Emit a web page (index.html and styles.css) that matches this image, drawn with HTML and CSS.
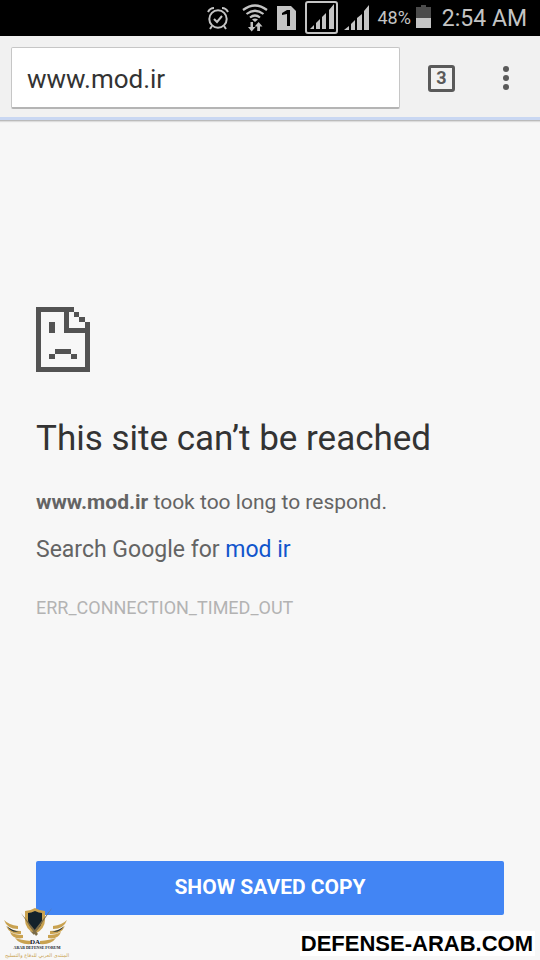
FILE: index.html
```html
<!DOCTYPE html>
<html lang="en">
<head>
  <meta charset="UTF-8">
  <meta name="viewport" content="width=device-width, initial-scale=1">
  <title>www.mod.ir</title>
  <link rel="stylesheet" href="styles.css">
</head>
<body>
  <div class="status-bar">
    <svg class="icon-alarm" width="22" height="24" viewBox="0 0 22 24" fill="none" stroke="#c4c4c4" stroke-width="2">
      <circle cx="11" cy="13" r="8.7"/>
      <path d="M7 13l3 3 5-6M1 6q2-4 6-4M21 6q-2-4-6-4M5 20l-2 3M17 20l2 3"/>
    </svg>
    <svg class="icon-wifi" width="26" height="28" viewBox="0 0 26 28" fill="none" stroke="#c4c4c4" stroke-width="2.200">
      <path d="M1 6q12-9 24 0M4.500 10q8.500-6.500 17 0M8 13.500q5-4 10 0"/>
      <path d="M10 15.500l3 2.500 3-2.500q-3-2-6 0z" fill="#c4c4c4" stroke="none"/>
      <path d="M8.500 18h2.500v5h2.500L9.700 27.500 6 23h2.500zM15.200 27v-4.500h-2.500l3.900-4.500 3.900 4.500H18V27z" fill="#c4c4c4" stroke="none"/>
    </svg>
    <svg class="icon-sim" width="19" height="24" viewBox="0 0 19 24">
      <path d="M0 0h14l5 5v19H0z" fill="#c4c4c4"/>
      <path d="M5 7l5-3h3v16h-3V8L5 9z" fill="#000"/>
    </svg>
    <svg class="icon-signal-box" width="34" height="34" viewBox="0 0 34 34" fill="#c4c4c4">
      <rect x="1" y="1" width="31" height="31" rx="2" fill="none" stroke="#c4c4c4" stroke-width="2"/>
      <path d="M5 28l4-4v4zM11 22l4-4v10h-4zM17 16l4-4v16h-4zM24 9l5-6v25h-5z"/>
    </svg>
    <svg class="icon-signal" width="26" height="26" viewBox="0 0 26 26" fill="#c4c4c4">
      <path d="M0 25l5-4v4zM7 19l4-4v10H7zM13 13l5-4v16h-5zM20 6l5-6v25h-5z"/>
    </svg>
    <span class="battery-level">48%</span>
    <svg class="icon-battery" width="15" height="23" viewBox="0 0 15 23">
      <path d="M0 2h5V0h5v2h5v11H0z" fill="#4b4b4b"/>
      <path d="M0 13h15v10H0z" fill="#c4c4c4"/>
    </svg>
    <span class="clock">2:54 AM</span>
  </div>

  <header class="toolbar">
    <input class="url" type="text" value="www.mod.ir" aria-label="Address">
    <button class="tabs" type="button" aria-label="Open tabs">3</button>
    <button class="menu" type="button" aria-label="Menu">
      <svg width="6" height="24" viewBox="0 0 6 24" fill="#5a5a5a">
        <circle cx="3" cy="3" r="3"/><circle cx="3" cy="12" r="3"/><circle cx="3" cy="21" r="3"/>
      </svg>
    </button>
  </header>

  <main class="error">
    <svg class="sad-page" width="54" height="65" viewBox="0 0 54 65" fill="#535353" shape-rendering="crispEdges">
      <path d="M0 0h38v5h-5v16h16v-6h5v50H0zM5 5v55h44V26H28V5z" fill-rule="evenodd"/>
      <path d="M38 5h5v5h-5zM43 10h6v5h-6zM13 15h6v11h-6zM19 42h16v5H19zM13 47h6v5h-6zM35 47h6v5h-6z"/>
    </svg>
    <h1>This site can’t be reached</h1>
    <p class="reason"><strong>www.mod.ir</strong> took too long to respond.</p>
    <p class="suggestion">Search Google for <a href="#">mod ir</a></p>
    <p class="code">ERR_CONNECTION_TIMED_OUT</p>
    <button class="saved-copy" type="button">SHOW SAVED COPY</button>
  </main>

  <div class="forum-logo">
    <svg width="66" height="37" viewBox="0 0 66 37">
      <path d="M31 0q5 3 10 3v9q0 9-10 14-10-5-10-14V3q5 0 10-3z" fill="#c9a250"/>
      <path d="M31 3q4 2 7 2v7q0 7-7 11-7-4-7-11V5q3 0 7-2z" fill="#13222b"/>
      <path d="M17 5l17 21-2 2zM48 0L30 27l-4-4 3 1z" fill="#7c6c47"/>
      <g fill="#c9a250">
        <path d="M0 12q5 5 14 6v3Q3 21 0 12zM2 18q6 5 15 5v3Q6 27 2 18zM6 24q5 3 13 3v3Q9 32 6 24zM11 30q6 2 16 3v3q-11 1-16-6z"/>
        <path d="M63 12q-5 5-14 6v3q11 0 14-9zM61 18q-6 5-15 5v3q11 1 15-8zM57 24q-5 3-13 3v3q10 2 13-6zM52 30q-6 2-16 3v3q11 1 16-6z"/>
      </g>
      <path d="M3 18q6 6 13 5-8 3-13-5zM60 18q-6 6-13 5 8 3 13-5z" fill="#26343b"/>
      <text class="logo-initials" x="31" y="36" text-anchor="middle">DA</text>
    </svg>
    <span class="logo-name">ARAB DEFENSE FORUM</span>
    <span class="logo-arabic" lang="ar" dir="rtl">المنتدى العربي للدفاع والتسليح</span>
  </div>
  <div class="watermark">DEFENSE-ARAB.COM</div>
</body>
</html>
```
FILE: styles.css
```css
* { box-sizing: border-box; }

body {
  margin: 0;
  min-height: 100vh;
  display: flex;
  flex-direction: column;
  position: relative;
  background: #f7f7f7;
  font-family: Roboto, "Liberation Sans", sans-serif;
}

button { padding: 0; border: 0; background: none; font-family: inherit; }

/* status bar */
.status-bar {
  height: 36px;
  padding-right: 13px;
  display: flex;
  align-items: center;
  justify-content: flex-end;
  gap: 5px;
  background: #000;
  color: #c4c4c4;
  white-space: nowrap;
}
.icon-alarm { margin-right: 8px; }
.icon-wifi, .icon-sim { margin-right: 4px; }
.icon-battery { margin-bottom: 3px; }
.battery-level { margin-left: 2px; font-size: 18px; line-height: 24px; }
.clock { margin-left: 6px; padding-top: 2px; font-size: 23px; line-height: 28px; }

/* browser toolbar */
.toolbar {
  height: 85px;
  padding: 0 20px 0 11px;
  display: flex;
  align-items: center;
  background: #f1f1f1;
  border-bottom: 1px solid #bbb;
  box-shadow: inset 0 -3px #c9d7f2, 0 1px 1px #ddd;
}
.url {
  flex: 1;
  min-width: 0;
  height: 62px;
  padding: 3px 15px 0;
  border: 1px solid #c6c6c6;
  border-bottom: 2px solid #b4b4b4;
  border-radius: 2px;
  background: #fff;
  color: #333;
  font-family: inherit;
  font-size: 26px;
}
.tabs {
  width: 27px;
  height: 27px;
  margin: 0 36px 0 28px;
  border: 3px solid #5a5a5a;
  border-radius: 3px;
  color: #5a5a5a;
  font-size: 18px;
  font-weight: 700;
  line-height: 20px;
}
.menu { width: 29px; height: 48px; }
.menu svg { display: block; margin: auto; }

/* error page */
.error {
  flex: 1;
  display: flex;
  flex-direction: column;
  padding: 186px 36px 45px;
  color: #646464;
}
h1 {
  margin: 45px 0 0;
  color: #333;
  font-size: 35px;
  font-weight: 400;
  line-height: 44px;
}
p { margin: 0; }
.reason { margin-top: 25px; font-size: 21px; line-height: 32px; }
.suggestion { margin-top: 17px; font-size: 23px; line-height: 30px; }
.suggestion a { color: #1155cc; text-decoration: none; }
.code { margin-top: 31px; color: #b3b3b3; font-size: 18px; line-height: 24px; }
.saved-copy {
  height: 54px;
  margin-top: auto;
  padding-bottom: 2px;
  border-radius: 2px;
  background: #4285f4;
  color: #fff;
  font-size: 21px;
  font-weight: 700;
}

/* forum marks over the page */
.forum-logo {
  position: absolute;
  left: 4px;
  bottom: 1px;
  display: flex;
  flex-direction: column;
  align-items: center;
  white-space: nowrap;
}
.forum-logo svg { display: block; }
.logo-initials { fill: #13222b; font: 700 7px "Liberation Serif", serif; }
.logo-name { color: #13222b; font: 700 4px/6px "Liberation Serif", serif; }
.logo-arabic { color: #c9a250; font: 5px/8px "DejaVu Sans", sans-serif; }
.watermark {
  position: absolute;
  right: 5px;
  bottom: 4px;
  padding: 0 2px 0 1px;
  background: #fff;
  color: #000;
  font: 700 22px/25px "Liberation Sans", Arial, sans-serif;
}
```
